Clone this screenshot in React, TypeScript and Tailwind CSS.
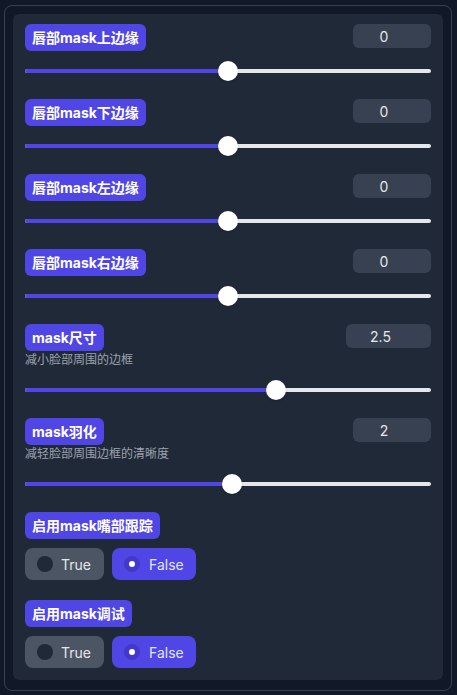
import React from "react";

const FONT = { fontFamily: 'Inter, "Noto Sans", "Noto Sans CJK SC", sans-serif' };

type SliderItem = { label: string; value: string; pct: number; desc?: string; boxW: string };

const sliders: SliderItem[] = [
  { label: "唇部mask上边缘", value: "0", pct: 0.5, boxW: "w-[78px]" },
  { label: "唇部mask下边缘", value: "0", pct: 0.5, boxW: "w-[78px]" },
  { label: "唇部mask左边缘", value: "0", pct: 0.5, boxW: "w-[78px]" },
  { label: "唇部mask右边缘", value: "0", pct: 0.5, boxW: "w-[78px]" },
  { label: "mask尺寸", value: "2.5", pct: 0.625, desc: "减小脸部周围的边框", boxW: "w-[85px]" },
  { label: "mask羽化", value: "2", pct: 0.51, desc: "减轻脸部周围边框的清晰度", boxW: "w-[78px]" },
];

function Chip({ children }: { children: React.ReactNode }) {
  return (
    <div className="h-[27px] px-[7px] flex items-center rounded-md bg-[#4f46e5] text-white text-[14px] font-bold leading-none">
      {children}
    </div>
  );
}

function Slider({ pct }: { pct: number }) {
  const pos = `calc(10px + (100% - 20px) * ${pct})`;
  return (
    <div className="relative h-5 w-full">
      <div className="absolute left-0 right-0 top-[8px] h-[4px] rounded-full bg-[#e5e7eb]" />
      <div className="absolute left-0 top-[8px] h-[4px] rounded-full bg-[#4f46e5]" style={{ width: pos }} />
      <div
        className="absolute top-0 h-5 w-5 -translate-x-1/2 rounded-full bg-white shadow-sm"
        style={{ left: pos }}
      />
    </div>
  );
}

function SliderSection({ item }: { item: SliderItem }) {
  return (
    <div className="flex flex-col mb-[18px]">
      <div className="flex justify-between items-start">
        <Chip>{item.label}</Chip>
        <div
          className={`${item.boxW} h-[24px] pr-4 rounded-md bg-[#374151] flex items-center justify-center text-[14px] text-[#e5e7eb]`}
        >
          {item.value}
        </div>
      </div>
      {item.desc ? (
        <>
          <div className="mt-[1px] h-4 text-[12px] leading-4 text-[#9ca3af]">{item.desc}</div>
          <div className="mt-[12px]">
            <Slider pct={item.pct} />
          </div>
        </>
      ) : (
        <div className="mt-[10px]">
          <Slider pct={item.pct} />
        </div>
      )}
    </div>
  );
}

function RadioSection({ label, last }: { label: string; last?: boolean }) {
  return (
    <div className={`flex flex-col ${last ? "" : "mb-[20px]"}`}>
      <div className="flex">
        <Chip>{label}</Chip>
      </div>
      <div className="mt-[9px] flex gap-2">
        <div className="h-8 w-[79px] pl-3 flex items-center gap-2 rounded-lg bg-[#4b5563] text-[14px] text-[#e5e7eb]">
          <span className="h-4 w-4 rounded-full bg-[#1f2937]" />
          <span>True</span>
        </div>
        <div className="h-8 w-[84px] pl-3 flex items-center gap-[9px] rounded-lg bg-[#4f46e5] text-[14px] text-[#e0e7ff]">
          <span className="h-4 w-4 rounded-full bg-[#4338ca] flex items-center justify-center">
            <span className="h-[6px] w-[6px] rounded-full bg-white" />
          </span>
          <span>False</span>
        </div>
      </div>
    </div>
  );
}

export default function App() {
  return (
    <div className="w-[457px] h-[695px] bg-[#111827] pt-[5px] pl-[4px]" style={FONT}>
      <div className="w-[448px] h-[686px] rounded-lg border border-[#374151] p-2">
        <div className="h-[666px] rounded-md bg-[#1f2937] px-3 pt-[10px] flex flex-col">
          {sliders.map((s) => (
            <SliderSection key={s.label} item={s} />
          ))}
          <RadioSection label="启用mask嘴部跟踪" />
          <RadioSection label="启用mask调试" last />
        </div>
      </div>
    </div>
  );
}
